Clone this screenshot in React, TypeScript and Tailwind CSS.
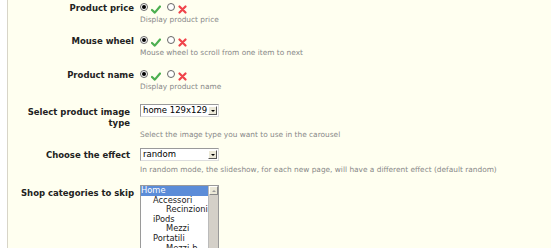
const Check = () => (
  <svg width="10" height="9" viewBox="0 0 10 9" className="mt-[2px]">
    <path d="M1 5 L3.8 7.6 L9 1.5" fill="none" stroke="#4caf50" strokeWidth="2.2" strokeLinecap="round" strokeLinejoin="round" />
  </svg>
);

const Cross = () => (
  <svg width="9" height="9" viewBox="0 0 9 9" className="mt-[2px]">
    <path d="M1.5 1.5 L7.5 7.5 M7.5 1.5 L1.5 7.5" fill="none" stroke="#f0444a" strokeWidth="2.2" strokeLinecap="round" />
  </svg>
);

function Radio({ checked, className = "" }: { checked?: boolean; className?: string }) {
  return (
    <span className={`w-[8px] h-[8px] rounded-full border border-[#666] bg-white flex items-center justify-center ${className}`}>
      {checked && <span className="w-[4px] h-[4px] rounded-full bg-black" />}
    </span>
  );
}

function YesNo() {
  return (
    <div className="flex items-start gap-[3px] h-[12px]">
      <Radio checked />
      <Check />
      <Radio className="ml-[3px]" />
      <Cross />
    </div>
  );
}

function FakeSelect({ value }: { value: string }) {
  return (
    <div className="w-[79px] h-[13px] border border-[#9a9a9a] border-r-[#ddd] border-b-[#ddd] bg-white flex items-center justify-between pl-[2px] pr-[1px]">
      <span className="text-[8.5px] leading-none text-black">{value}</span>
      <span className="w-[9px] h-[9px] bg-[#ece9d8] border border-[#fff] border-r-[#555] border-b-[#555] flex items-center justify-center">
        <span className="w-0 h-0 border-l-[2px] border-r-[2px] border-t-[2px] border-l-transparent border-r-transparent border-t-black" />
      </span>
    </div>
  );
}

function Row({
  label,
  children,
  desc,
  labelPad = "",
  descGap = "",
  className = "",
}: {
  label: React.ReactNode;
  children: React.ReactNode;
  desc?: string;
  labelPad?: string;
  descGap?: string;
  className?: string;
}) {
  return (
    <div className={`grid grid-cols-[126px_1fr] gap-x-[6px] ${className}`}>
      <div className={`text-right font-bold text-[8.5px] leading-[11px] text-[#222] ${labelPad}`}>{label}</div>
      <div className="flex flex-col">
        {children}
        {desc && <p className={`text-[7.4px] leading-[10px] text-[#888] whitespace-nowrap ${descGap}`}>{desc}</p>}
      </div>
    </div>
  );
}

const cats: [string, number][] = [
  ["Home", 0],
  ["Accessori", 1],
  ["Recinzioni", 2],
  ["iPods", 1],
  ["Mezzi", 2],
  ["Portatili", 1],
  ["Mezzi-b", 2],
];

export default function App() {
  return (
    <div className="w-[551px] h-[248px] overflow-hidden bg-white pl-[7px]" style={{ fontFamily: '"DejaVu Sans", Verdana, sans-serif' }}>
      <div className="h-full border-l border-[#d8d5c8] bg-[#fffff0] pt-[3px]">
        <Row label="Product price" desc="Display product price" className="mb-[11px]">
          <YesNo />
        </Row>
        <Row label="Mouse wheel" desc="Mouse wheel to scroll from one item to next" className="mb-[12px]">
          <YesNo />
        </Row>
        <Row label="Product name" desc="Display product name" className="mb-[12px]">
          <YesNo />
        </Row>
        <Row
          label={<>Select product image<br />type</>}
          labelPad="pr-[4px] pt-[3px]"
          descGap="mt-[13px]"
          desc="Select the image type you want to use in the carousel"
          className="mb-[8px]"
        >
          <FakeSelect value="home 129x129" />
        </Row>
        <Row
          label="Choose the effect"
          labelPad="pr-[4px] pt-[2px]"
          descGap="mt-[4px]"
          desc="In random mode, the slideshow, for each new page, will have a different effect (default random)"
          className="mb-[10px]"
        >
          <FakeSelect value="random" />
        </Row>
        <Row label="Shop categories to skip" labelPad="pt-[3px]">
          <div className="w-[79px] h-[80px] border border-[#9a9a9a] bg-white flex">
            <div className="flex-1 overflow-hidden">
              {cats.map(([name, lvl]) => (
                <div
                  key={name}
                  className={`text-[8.3px] leading-[9.6px] whitespace-nowrap ${lvl === 0 ? "bg-[#5b8cd8] text-white" : "text-[#222]"} ${lvl === 1 ? "pl-[12px]" : lvl === 2 ? "pl-[25px]" : ""}`}
                >
                  {name}
                </div>
              ))}
            </div>
            <div className="w-[10px] bg-[#d4d0c8] border-l border-[#bbb] flex flex-col justify-between">
              <div className="h-[9px] bg-[#ece9d8] border border-[#fff] border-r-[#888] border-b-[#888] flex items-center justify-center">
                <span className="w-0 h-0 border-l-[2px] border-r-[2px] border-b-[2px] border-l-transparent border-r-transparent border-b-[#999]" />
              </div>
            </div>
          </div>
        </Row>
      </div>
    </div>
  );
}
